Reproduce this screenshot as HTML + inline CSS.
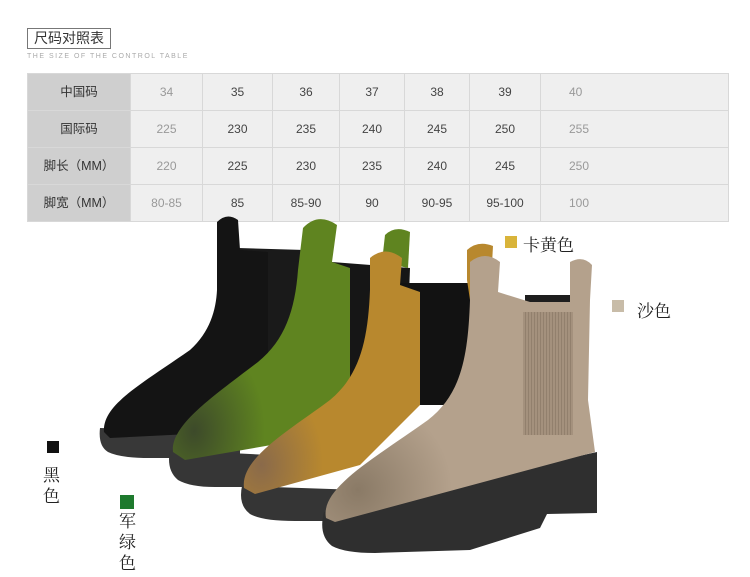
<!DOCTYPE html>
<html><head><meta charset="utf-8"><style>
*{margin:0;padding:0;box-sizing:border-box}
body{width:750px;height:577px;background:#fff;position:relative;overflow:hidden;font-family:"Liberation Sans","Noto Sans CJK SC",sans-serif}
.title{position:absolute;left:27px;top:28px;width:84px;height:21px;border:1px solid #777;font-size:14px;line-height:19px;text-align:center;color:#333}
.sub{position:absolute;left:27px;top:53px;font-size:7px;letter-spacing:1.5px;color:#aaa;white-space:nowrap}
table{position:absolute;left:27px;top:73px;width:702px;height:148px;border-collapse:collapse;background:#efefef;border:1px solid #d8d8d8}
td{border:1px solid #d8d8d8;text-align:center;font-size:12px;line-height:14px;color:#444;height:37px;vertical-align:middle;padding:0}
td.h{background:#cfcfcf;color:#333;font-size:12.5px;width:103px}
td.l{color:#999}
td.last{color:#999;text-align:left;padding-left:28px}
.lg{position:absolute;font-size:17px;color:#222;font-family:"Liberation Serif","Noto Serif CJK SC",serif}
.sq{position:absolute;width:12px;height:12px}
</style></head><body>
<div class="title">尺码对照表</div>
<div class="sub">THE SIZE OF THE CONTROL TABLE</div>
<table>
<tr><td class="h">中国码</td><td class="l" style="width:72px">34</td><td style="width:70px">35</td><td style="width:67px">36</td><td style="width:65px">37</td><td style="width:65px">38</td><td style="width:71px">39</td><td class="last">40</td></tr>
<tr><td class="h">国际码</td><td class="l">225</td><td>230</td><td>235</td><td>240</td><td>245</td><td>250</td><td class="last">255</td></tr>
<tr><td class="h">脚长（MM）</td><td class="l">220</td><td>225</td><td>230</td><td>235</td><td>240</td><td>245</td><td class="last">250</td></tr>
<tr><td class="h">脚宽（MM）</td><td class="l">80-85</td><td>85</td><td>85-90</td><td>90</td><td>90-95</td><td>95-100</td><td class="last">100</td></tr>
</table>
<svg width="750" height="577" style="position:absolute;left:0;top:0">
<defs>
<radialGradient id="tg" cx="0.12" cy="0.88" r="0.4"><stop offset="0" stop-color="#3d4a2a"/><stop offset="1" stop-color="#5f8420"/></radialGradient>
<radialGradient id="ty" cx="0.1" cy="0.88" r="0.35"><stop offset="0" stop-color="#8a6a4a"/><stop offset="1" stop-color="#b8882e"/></radialGradient>
<radialGradient id="ts" cx="0.12" cy="0.88" r="0.35"><stop offset="0" stop-color="#8a7a66"/><stop offset="1" stop-color="#b4a18c"/></radialGradient>
<pattern id="st" width="3" height="10" patternUnits="userSpaceOnUse"><rect width="3" height="10" fill="#a28f7b"/><rect width="1" height="10" fill="#8e7c69"/></pattern>
</defs>
<path d="M238,248 L305,250 L300,400 L238,400Z" fill="#1a1a1a"/>
<path d="M100,428 Q98,446 108,452 Q120,458 150,458 L240,458 L240,432Z" fill="#383838"/>
<path d="M104,432 C102,405 140,385 190,350 C210,332 216,310 217,290 L217,222 Q227,212 238,220 L240,250 L268,252 L268,415 L230,432 L110,438Z" fill="#141414"/>
<path d="M332,262 L410,268 L405,400 L330,400Z" fill="#161616"/>
<path d="M170,450 Q166,470 178,480 Q190,487 215,487 L270,487 L270,455Z" fill="#363636"/>
<path d="M173,452 C170,425 215,395 258,362 C285,340 295,310 298,270 L303,228 Q318,212 337,225 L332,262 L350,268 L350,390 L300,440 L185,460Z" fill="url(#tg)"/>
<path d="M382,262 L385,235 Q395,225 410,232 L408,268Z" fill="#5f8420"/>
<path d="M400,283 L490,283 L480,405 L420,405Z" fill="#121212"/>
<path d="M242,486 Q238,505 250,514 Q262,521 295,521 L360,521 L360,490Z" fill="#353535"/>
<path d="M244,488 C240,458 290,430 330,400 C360,375 368,340 370,290 L370,258 Q385,245 402,258 L400,285 L420,292 L420,405 L360,465 L255,494Z" fill="url(#ty)"/>
<path d="M467,280 L467,250 Q478,240 493,246 L490,300 L470,300Z" fill="#b8882e"/>
<path d="M525,295 L588,295 L588,318 L525,318Z" fill="#1e1e1e"/>
<path d="M324,512 Q318,535 332,546 Q345,553 375,553 L470,550 L540,528 L547,514 L597,513 L597,452Z" fill="#2f2f2f"/>
<path d="M326,518 C320,488 375,458 428,420 C460,395 468,360 470,300 L470,262 Q485,250 500,262 L498,292 L530,302 L570,302 L570,262 Q583,255 592,265 L590,300 L588,400 L595,452 L335,522Z" fill="url(#ts)"/>
<path d="M523,312 L573,312 L573,435 L523,435Z" fill="url(#st)" opacity="0.9"/>
</svg>
<div class="sq" style="left:505px;top:236px;background:#d9b43a"></div>
<div class="lg" style="left:523px;top:231px">卡黄色</div>
<div class="sq" style="left:612px;top:300px;background:#c8bca8"></div>
<div class="lg" style="left:637px;top:297px">沙色</div>
<div class="sq" style="left:47px;top:441px;background:#111"></div>
<div class="lg" style="left:43px;top:465px;line-height:21px;width:18px">黑<br>色</div>
<div class="sq" style="left:120px;top:495px;width:14px;height:14px;background:#1e7a2e"></div>
<div class="lg" style="left:119px;top:511px;line-height:21px;width:18px">军<br>绿<br>色</div>
</body></html>
